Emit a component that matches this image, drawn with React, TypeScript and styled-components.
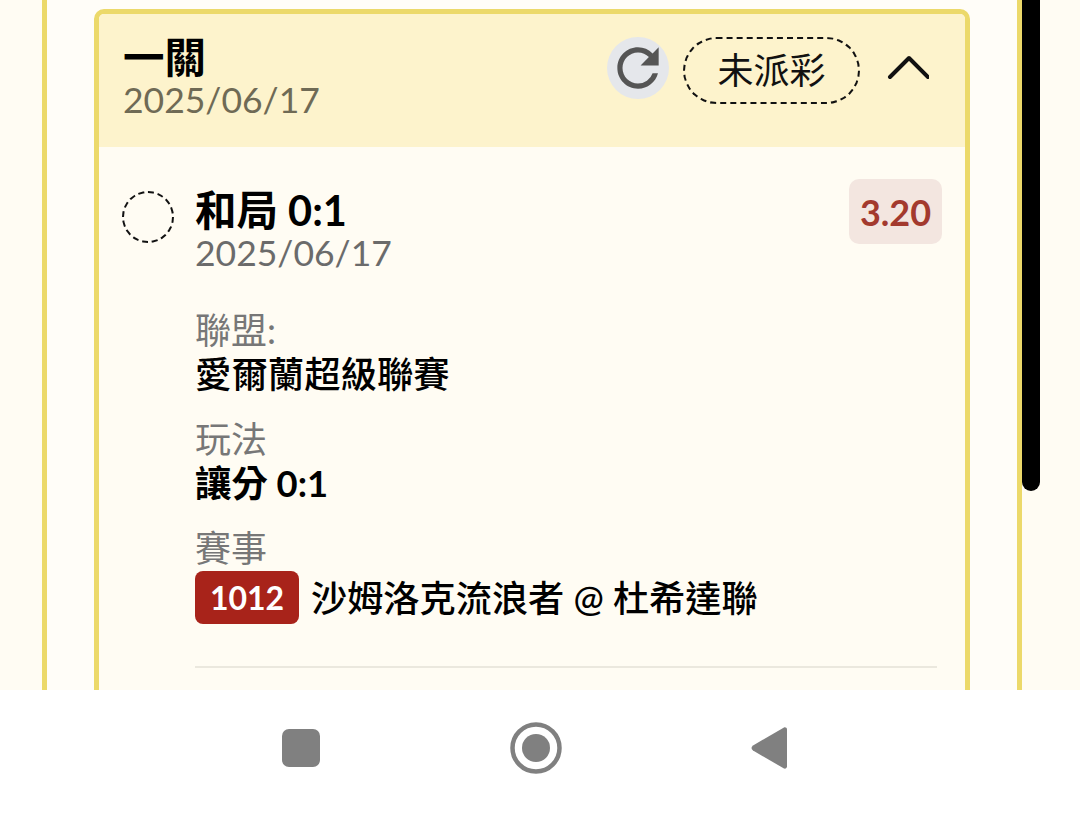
import React from "react";
import styled, { createGlobalStyle } from "styled-components";
import { MdRefresh } from "react-icons/md";

const Global = createGlobalStyle`
  html, body { margin: 0; padding: 0; background: #ffffff; }
  body { font-family: Lato, "Noto Sans CJK TC", sans-serif; }
  * { box-sizing: border-box; }
`;

const Screen = styled.div`
  width: 1080px;
  height: 814px;
  display: flex;
  flex-direction: column;
  overflow: hidden;
  background: #fff;
`;

const Viewport = styled.div`
  position: relative;
  height: 690px;
  overflow: hidden;
  background: #fffcf3;
  padding: 0 58px 0 42px;
`;

const Scrollbar = styled.div`
  position: absolute;
  top: -20px;
  left: 1022px;
  width: 18px;
  height: 511px;
  background: #000;
  border-radius: 0 0 9px 9px;
`;

const Panel = styled.div`
  height: 900px;
  background: #fffdf8;
  border-left: 5px solid #ecd96a;
  border-right: 5px solid #ecd96a;
  padding: 9px 47px 0;
`;

const Card = styled.section`
  border: 5px solid #ecd96a;
  border-radius: 10px;
  background: #fffcf3;
  overflow: hidden;
`;

const CardHeader = styled.header`
  height: 133px;
  background: #fdf3cc;
  display: flex;
  align-items: flex-start;
  padding: 23px 36px 0 24px;
`;

const HeaderText = styled.div`
  flex: 1;
  display: flex;
  flex-direction: column;
  margin-top: -2px;
`;

const Title = styled.div`
  font-size: 41.5px;
  line-height: 44px;
  font-weight: 700;
  color: #000;
`;

const HeaderDate = styled.div`
  font-size: 35.5px;
  line-height: 42px;
  color: #6f6a55;
`;

const RefreshButton = styled.div`
  width: 62px;
  height: 62px;
  border-radius: 50%;
  background: #e5e7eb;
  display: flex;
  align-items: center;
  justify-content: center;
  color: #555555;
  margin-right: 14px;
`;

const StatusPill = styled.div`
  width: 177px;
  height: 67px;
  border: 2px dashed #111;
  border-radius: 34px;
  display: flex;
  align-items: center;
  justify-content: center;
  padding-bottom: 5px;
  font-size: 36px;
  color: #111;
`;

const Chevron = styled.svg`
  width: 44px;
  height: 26px;
  margin: 17px 0 0 25px;
  flex: none;
`;

const Body = styled.div`
  padding: 32px 23px 220px 23px;
`;

const Selection = styled.div`
  display: flex;
  align-items: flex-start;
`;

const RadioMark = styled.div`
  width: 52px;
  height: 52px;
  border: 2px dashed #111;
  border-radius: 50%;
  margin: 12px 21px 0 0;
  flex: none;
`;

const SelectionText = styled.div`
  flex: 1;
  display: flex;
  flex-direction: column;
`;

const PickName = styled.div`
  font-size: 41.5px;
  line-height: 48px;
  font-weight: 700;
  color: #000;
  margin-top: 7px;
`;

const PickDate = styled.div`
  font-size: 35.5px;
  line-height: 36px;
  color: #6b6b6b;
  margin-top: 1px;
`;

const Odds = styled.div`
  width: 93px;
  height: 65px;
  border-radius: 10px;
  background: #f3e6e0;
  color: #a33a2e;
  font-size: 36px;
  font-weight: 700;
  display: flex;
  align-items: center;
  justify-content: center;
  flex: none;
`;

const Details = styled.div`
  margin: 0 0 0 73px;
  padding-top: 37px;
  display: flex;
  flex-direction: column;
  gap: 21px;
`;

const Field = styled.div`
  display: flex;
  flex-direction: column;
`;

const Label = styled.div`
  font-size: 36px;
  line-height: 44px;
  color: #777;
`;

const Value = styled.div`
  font-size: 36.4px;
  line-height: 44px;
  font-weight: 500;
  color: #000;
  display: flex;
  align-items: center;
`;

const BoldValue = styled(Value)`
  font-weight: 700;
`;

const MatchValue = styled(Value)`
  margin-top: 1px;
  font-size: 36.2px;
`;

const MatchNo = styled.span`
  width: 104px;
  height: 53px;
  border-radius: 8px;
  background: #a8231a;
  color: #fff;
  font-size: 32px;
  font-weight: 700;
  display: flex;
  align-items: center;
  justify-content: center;
  margin-right: 12px;
`;

const Divider = styled.hr`
  border: 0;
  height: 2px;
  background: #ebe8de;
  margin: 42px 0 0 73px;
  width: 742px;
`;

const NavBar = styled.nav`
  height: 124px;
  background: #fff;
  display: flex;
  align-items: center;
  padding: 0 0 8px 282px;
  color: #808080;
`;

const NavIcon = styled.svg`
  display: block;
  flex: none;
`;

const HomeIcon = styled(NavIcon)`
  margin-left: 190px;
`;

const BackIcon = styled(NavIcon)`
  margin-left: 189px;
`;

export default function App() {
  return (
    <Screen>
      <Global />
      <Viewport>
        <Panel>
          <Card>
            <CardHeader>
              <HeaderText>
                <Title>一關</Title>
                <HeaderDate>2025/06/17</HeaderDate>
              </HeaderText>
              <RefreshButton>
                <MdRefresh size={62} />
              </RefreshButton>
              <StatusPill>未派彩</StatusPill>
              <Chevron viewBox="0 0 44 26" fill="none" stroke="#111" strokeWidth="4" strokeLinecap="round" strokeLinejoin="round">
                <path d="M5 23L24 4L43 23" />
              </Chevron>
            </CardHeader>
            <Body>
              <Selection>
                <RadioMark />
                <SelectionText>
                  <PickName>和局 0:1</PickName>
                  <PickDate>2025/06/17</PickDate>
                </SelectionText>
                <Odds>3.20</Odds>
              </Selection>
              <Details>
                <Field>
                  <Label>聯盟:</Label>
                  <Value>愛爾蘭超級聯賽</Value>
                </Field>
                <Field>
                  <Label>玩法</Label>
                  <BoldValue>讓分 0:1</BoldValue>
                </Field>
                <Field>
                  <Label>賽事</Label>
                  <MatchValue>
                    <MatchNo>1012</MatchNo>
                    沙姆洛克流浪者 @ 杜希達聯
                  </MatchValue>
                </Field>
              </Details>
              <Divider />
            </Body>
          </Card>
        </Panel>
        <Scrollbar />
      </Viewport>
      <NavBar>
        <NavIcon width="38" height="38" viewBox="0 0 38 38">
          <rect width="38" height="38" rx="7" fill="currentColor" />
        </NavIcon>
        <HomeIcon width="52" height="52" viewBox="0 0 52 52">
          <circle cx="26" cy="26" r="23.5" fill="none" stroke="currentColor" strokeWidth="4.5" />
          <circle cx="26" cy="26" r="14" fill="currentColor" />
        </HomeIcon>
        <BackIcon width="36" height="44" viewBox="0 0 36 44">
          <path d="M33 1.5C34.5 1 36 2 36 3.5V40.5C36 42 34.5 43 33 42.5L2 24.5C0 23 0 21 2 19.5Z" fill="currentColor" />
        </BackIcon>
      </NavBar>
    </Screen>
  );
}
